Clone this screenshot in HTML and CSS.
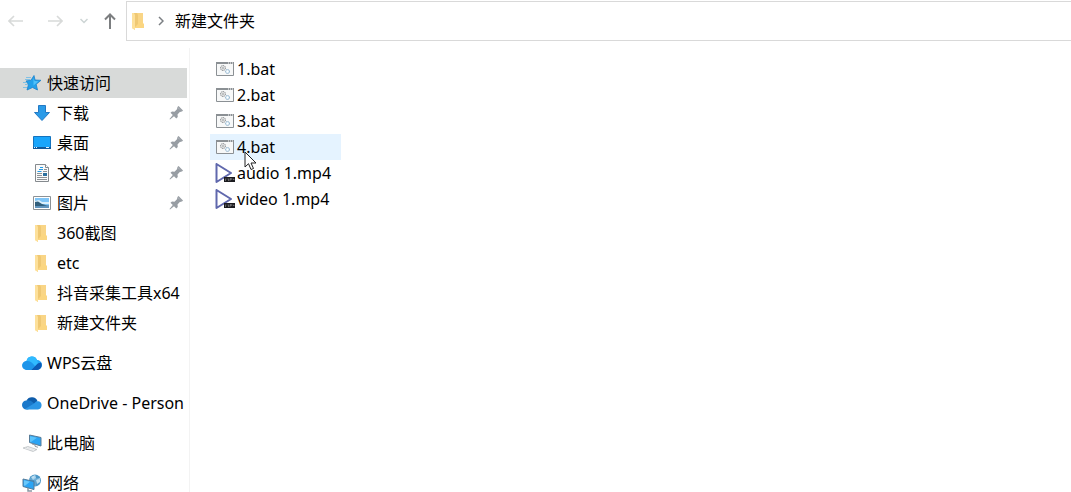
FILE: index.html
```html
<!DOCTYPE html>
<html lang="zh-CN">
<head>
  <meta charset="UTF-8">
  <meta name="viewport" content="width=device-width, initial-scale=1.0">
  <title>新建文件夹</title>
  <link rel="stylesheet" href="styles.css">
</head>
<body>
  <!-- 图标 -->
  <svg class="sprite" aria-hidden="true">
    <symbol id="folder" viewBox="0 0 12 18">
      <path d="M0 1h11v10l1 1v4H3v2L0 16z" fill="#fbd681"/>
      <path d="M2 1h3l1 2v9l-3 3v2l-1-1z" fill="#efc873"/>
      <path d="M0 1h2l1 2v15l-3-2z" fill="#fde09a"/>
      <path d="M6 1h5v9H6z" fill="#f9d586"/>
    </symbol>
    <symbol id="pin" viewBox="0 0 14 14">
      <path d="M8 1l5 4-1 1-1-.2-2.500 2.700.3 2.500-1.500 1.500-2.300-2.300L1 13.500.5 13l3.300-4L1.500 6.800 3 5.500l2.500.3L8.200 3z" fill="#979da3"/>
      <path d="M9 .5l4.500 4.500" stroke="#979da3" stroke-width="1.500"/>
    </symbol>
    <symbol id="bat" viewBox="0 0 18 14">
      <path d="M.5.5h17v13H.5z" fill="#f7f8f8" stroke="#8b9094"/>
      <path d="M0 0h18v2H0z" fill="#8b9094"/>
      <path d="M12 1h1M14 1h1M16 1h1" stroke="#fff"/>
      <circle cx="7" cy="6" r="2.500" fill="#eee" stroke="#808488" stroke-dasharray="1.300 .6"/>
      <circle cx="7" cy="6" r="1" fill="#fff" stroke="#85898c" stroke-width=".6"/>
      <circle cx="11.500" cy="9.500" r="2" fill="#e4f1fa" stroke="#83a8c4" stroke-dasharray="1.200 .5"/>
      <circle cx="11.500" cy="9.500" r=".7" fill="#fff"/>
    </symbol>
    <symbol id="mp4" viewBox="0 0 20 20">
      <path d="M1.500 1v18L16 10z" fill="#fff" stroke="#6068ad" stroke-width="2" stroke-linejoin="round"/>
      <path d="M9 14h11v5H9z" fill="#1b1b1f"/>
      <path d="M10.500 18v-2.500M12 15.500v1M13.500 15.500V18M15 18v-2.500h1.500v1H15M18 15.500v1h1.500" fill="none" stroke="#999" stroke-width=".6"/>
    </symbol>
  </svg>

  <header class="toolbar">
    <nav class="history">
      <button type="button" aria-label="后退">
        <svg width="16" height="12" viewBox="0 0 16 12"><path d="M15 6H1M6 1L1 6l5 5" fill="none" stroke="#d8dad9" stroke-width="1.600"/></svg>
      </button>
      <button type="button" aria-label="前进">
        <svg width="16" height="12" viewBox="0 0 16 12"><path d="M1 6h14M10 1l5 5-5 5" fill="none" stroke="#d8dad9" stroke-width="1.600"/></svg>
      </button>
      <button type="button" class="recent" aria-label="最近浏览的位置">
        <svg width="8" height="6" viewBox="0 0 8 6"><path d="M.5 1L4 4.500 7.500 1" fill="none" stroke="#ccd4d4" stroke-width="1.500"/></svg>
      </button>
      <button type="button" class="up" aria-label="上移">
        <svg width="12" height="16" viewBox="0 0 12 16"><path d="M6 16V1M1 6.500l5-5 5 5" fill="none" stroke="#7c7e80" stroke-width="2"/></svg>
      </button>
    </nav>
    <div class="address">
      <svg width="12" height="18"><use href="#folder"/></svg>
      <svg class="chevron" width="6" height="10" viewBox="0 0 6 10"><path d="M1 1l4 4-4 4" fill="none" stroke="#7b7f83" stroke-width="1.500"/></svg>
      <a href="#">新建文件夹</a>
    </div>
  </header>

  <main class="explorer">
    <!-- 导航窗格 -->
    <nav class="sidebar">
      <a class="item root selected" href="#">
        <svg class="icon" width="20" height="18" viewBox="0 0 20 18">
          <path d="M12 1.500l1 4.500 6 .3-4.800 4 1.300 5.700-5-2.500L5 16l1.500-5.500L4 7l5-.8z" fill="#22a0ea" stroke="#1c82cc" stroke-width=".8"/>
          <path d="M11.500 4l1 3 4 .3-5 4.200z" fill="#4fc1fa"/>
          <path d="M4 3.500h5M3 5.500h5M1 8.500h4M3 10.500h3M1 13.500h4" stroke="#6bb9e6" stroke-width=".8"/>
        </svg>
        <span>快速访问</span>
      </a>
      <a class="item" href="#">
        <svg class="icon" width="18" height="16" viewBox="0 0 18 16"><path d="M5.500.5h7v7h4L9 15.500 1.500 7.500h4z" fill="#2b9be8" stroke="#2379c4"/></svg>
        <span>下载</span>
        <svg class="pin" width="14" height="14"><use href="#pin"/></svg>
      </a>
      <a class="item" href="#">
        <svg class="icon" width="18" height="14" viewBox="0 0 18 14">
          <path d="M.5.5h17v12H.5z" fill="#19a5fb" stroke="#1473be"/>
          <path d="M0 11h18v2H0z" fill="#12599a"/><path d="M1 11.500h1M3 11.500h1M13 11.500h3" stroke="#dff2ff"/>
        </svg>
        <span>桌面</span>
        <svg class="pin" width="14" height="14"><use href="#pin"/></svg>
      </a>
      <a class="item" href="#">
        <svg class="icon" width="18" height="18" viewBox="0 0 18 18">
          <path d="M2.500.5h10l3 3v14h-13z" fill="#fafafa" stroke="#858a8e"/><path d="M12.500.5v3h3" fill="#fff" stroke="#858a8e"/>
          <path d="M7 3.500h3M6 5.500h4M4.500 7.500h4" stroke="#249be6" stroke-width="1.200"/>
          <path d="M11 5.500h3M10 7.500h4M4 9.500h5M4 11.500h5M4 13.500h10M4 15.500h10" stroke="#8b9195"/>
          <path d="M10 9h4v3h-4z" fill="#296f9e"/>
        </svg>
        <span>文档</span>
        <svg class="pin" width="14" height="14"><use href="#pin"/></svg>
      </a>
      <a class="item" href="#">
        <svg class="icon" width="18" height="14" viewBox="0 0 18 14">
          <path d="M.5.5h17v13H.5z" fill="#fff" stroke="#8c9296"/>
          <path d="M2 2h14v10H2z" fill="#7fc5f7"/><path d="M2 5l4-1 3 2h7v2H2z" fill="#d9effc"/>
          <path d="M2 6l3-.5 4 2.500 7 2v2H2z" fill="#315f7c"/><path d="M2 10h8l6-1v3H2z" fill="#6094bd"/>
        </svg>
        <span>图片</span>
        <svg class="pin" width="14" height="14"><use href="#pin"/></svg>
      </a>
      <a class="item folder" href="#"><svg class="icon" width="12" height="18"><use href="#folder"/></svg><span>360截图</span></a>
      <a class="item folder" href="#"><svg class="icon" width="12" height="18"><use href="#folder"/></svg><span>etc</span></a>
      <a class="item folder" href="#"><svg class="icon" width="12" height="18"><use href="#folder"/></svg><span>抖音采集工具x64</span></a>
      <a class="item folder" href="#"><svg class="icon" width="12" height="18"><use href="#folder"/></svg><span>新建文件夹</span></a>

      <a class="item root spaced" href="#">
        <svg class="icon" width="20" height="16" viewBox="0 0 20 16">
          <path d="M5 15a4.500 4.500 0 0 1-.5-9A5.500 5.500 0 0 1 15 5a5 5 0 0 1 0 10z" fill="#24a4f5"/>
          <path d="M9 15l6.500-6.500L19 7.500A5 5 0 0 1 15 15z" fill="#0d5ab5"/>
          <path d="M5 15a4.500 4.500 0 0 1-.5-9c3-.5 5 1 7 3.500L13 11l-4 4z" fill="#1e95ea"/>
          <path d="M4.500 6A5.500 5.500 0 0 1 15 5l1 3-3 3C10 7 8 5.500 4.500 6z" fill="#30baff"/>
        </svg>
        <span>WPS云盘</span>
      </a>
      <a class="item root spaced" href="#">
        <svg class="icon" width="20" height="14" viewBox="0 0 20 14">
          <path d="M4.500 4.500A6 6 0 0 1 15.500 5L12 9z" fill="#0e5caa"/>
          <path d="M4.500 13.500a4.500 4.500 0 0 1 0-9C7 4 9 5 11 6.500L14 9l-8 4.500z" fill="#1a78ca"/>
          <path d="M3 13l9-5.500c2-2.500 3-2.500 4.500-2.200a4.200 4.200 0 0 1-.5 8.200H5z" fill="#2b95e5"/>
        </svg>
        <span>OneDrive - Person</span>
      </a>
      <a class="item root spaced" href="#">
        <svg class="icon" width="20" height="18" viewBox="0 0 20 18">
          <path d="M7.500 1L19 3.500V12L7.500 8.500z" fill="#2ba4f4" stroke="#587c98"/><path d="M8 2.200l7 1.600L9 8l-1-.2z" fill="#5cc3fb"/>
          <path d="M10 10l3 .8v1.500l3 1" stroke="#929ca4" fill="none"/>
          <path d="M1 14l5-1.500 9 3-4 2z" fill="#d3d7da" stroke="#b1b7bb" stroke-width=".6"/><path d="M3 14l9 2.500M5 13.300l8 2.500" stroke="#fff" stroke-width=".6"/>
        </svg>
        <span>此电脑</span>
      </a>
      <a class="item root spaced" href="#">
        <svg class="icon" width="20" height="18" viewBox="0 0 20 18">
          <circle cx="13" cy="6.500" r="6" fill="#4a96c7"/><path d="M9 3l4-2 1 3-3 2zM14 6l4-2v4l-3 2z" fill="#bfdff1"/><path d="M13 1v11M8 5h10" stroke="#8ac3e5" stroke-width=".7"/>
          <path d="M1 5l11 2.500v8L1 12.500z" fill="#2ba4f4" stroke="#527b9b"/><path d="M2 6.200l6 1.500-5 4-1-.2z" fill="#6ac8fb"/>
          <path d="M6 14v3h4" stroke="#8a98a4" fill="none" stroke-width="1.500"/>
        </svg>
        <span>网络</span>
      </a>
    </nav>

    <!-- 文件列表 -->
    <section class="content">
      <ul class="files">
        <li><svg class="icon" width="18" height="14"><use href="#bat"/></svg>1.bat</li>
        <li><svg class="icon" width="18" height="14"><use href="#bat"/></svg>2.bat</li>
        <li><svg class="icon" width="18" height="14"><use href="#bat"/></svg>3.bat</li>
        <li class="hover">
          <svg class="icon" width="18" height="14"><use href="#bat"/></svg>4.bat
          <svg class="cursor" width="13" height="20" viewBox="0 0 13 20"><path d="M1 1v15l3.500-3.300L7 18.500l2.500-1L7 12h5z" fill="#fff" stroke="#222"/></svg>
        </li>
        <li class="video"><svg class="icon" width="20" height="20"><use href="#mp4"/></svg>audio 1.mp4</li>
        <li class="video"><svg class="icon" width="20" height="20"><use href="#mp4"/></svg>video 1.mp4</li>
      </ul>
    </section>
  </main>
</body>
</html>
```

FILE: styles.css
```css
* {
  box-sizing: border-box;
}
body {
  margin: 0;
  min-height: 100vh;
  display: flex;
  flex-direction: column;
  background-color: #fff;
  color: #000;
  font-family: "Noto Sans", "Noto Sans CJK SC", sans-serif;
  font-size: 16px;
  line-height: 24px;
}
html {
  overflow: hidden;
}
a {
  color: inherit;
  text-decoration: none;
}
svg {
  display: block;
  flex-shrink: 0;
}
.sprite {
  position: absolute;
  width: 0;
  height: 0;
}

/* 顶部工具栏 */
.toolbar {
  display: flex;
  flex-shrink: 0;
  height: 41px;
  padding-top: 1px;
}
.history {
  display: flex;
  align-items: center;
  width: 126px;
  padding-left: 8px;
}
.history button {
  display: flex;
  padding: 0;
  margin-right: 23px;
  border: none;
  background: none;
}
.history .recent {
  margin-left: -6px;
  margin-right: 16px;
}
.history .up {
  margin-right: 0;
}
.address {
  flex: 1;
  display: flex;
  align-items: center;
  padding-left: 5px;
  border: 1px solid #d9d9d9;
  border-right: none;
}
.chevron {
  margin: 0 11px 0 14px;
}

/* 导航窗格 */
.explorer {
  flex: 1;
  display: flex;
  padding-top: 7px;
}
.sidebar {
  width: 190px;
  flex-shrink: 0;
  padding: 20px 2px 0 0;
  border-right: 1px solid #f3f3f3;
}
.item {
  display: flex;
  align-items: center;
  height: 30px;
  padding-left: 33px;
  padding-right: 4px;
  white-space: nowrap;
}
.item .icon {
  margin-right: 6px;
}
.item span {
  flex: 1;
}
.folder {
  padding-left: 35px;
}
.folder .icon {
  margin-right: 10px;
}
.root {
  padding-left: 22px;
  padding-right: 0;
}
.root .icon {
  margin-right: 5px;
}
.selected {
  background-color: #d8dad9;
}
.spaced {
  margin-top: 10px;
}

/* 文件列表 */
.content {
  flex: 1;
  padding: 8px 20px;
}
.files {
  display: inline-block;
  margin: 0;
  padding: 0;
  list-style: none;
}
.files li {
  display: flex;
  align-items: center;
  position: relative;
  height: 26px;
  padding-left: 6px;
  padding-right: 10px;
  white-space: nowrap;
}
.files .icon {
  margin-right: 3px;
}
.files .video {
  padding-left: 5px;
}
.files .video .icon {
  margin-right: 2px;
}
.files .hover {
  background-color: #e5f3ff;
}
.cursor {
  position: absolute;
  left: 34px;
  top: 17px;
  z-index: 1;
}
```
